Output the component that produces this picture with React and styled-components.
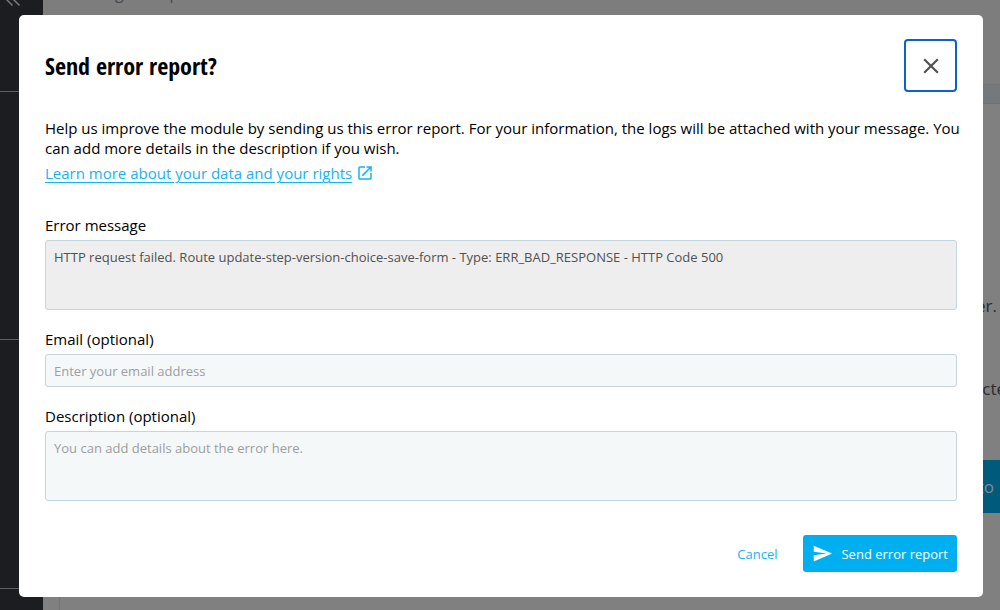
import React from "react"
import styled, { createGlobalStyle, css } from "styled-components"

const GlobalStyle = createGlobalStyle`
    *, *::before, *::after {
        box-sizing: border-box;
    }
    body {
        margin: 0;
        overflow: hidden;
        background: #7f7f7f;
        color: #000;
        font-family: "Open Sans", "Noto Sans", sans-serif;
        font-size: 15px;
        line-height: 20px;
    }
    button, input, textarea {
        font-family: inherit;
    }
`
const Page = styled.div`
    display: flex;
    height: 100vh;
    overflow: hidden;
    background: #808080;
    color: #2b2c30;
`
const Sidebar = styled.nav`
    flex: none;
    width: 43px;
    background: #1b1d21;
    color: #77787a;
`
const SidebarGroup = styled.div`
    height: ${props => props.$height}px;
    border-bottom: 1px solid #5d6163;
`
const CollapseButton = styled.button`
    display: flex;
    align-items: flex-start;
    height: 12px;
    padding: 0 0 0 6px;
    border: 0;
    background: none;
    color: inherit;
`
const Main = styled.main`
    flex: 1;
    min-width: 0;
`
const Header = styled.header`
    height: 85px;
    overflow: hidden;
    border-bottom: 1px solid #737476;
    background: #7d7d7d;
`
const HeaderTitle = styled.h2`
    margin: -20px 0 0;
    padding-left: 72px;
    color: #45474a;
    font-size: 16px;
    font-weight: 400;
    line-height: 26px;
`
const Toolbar = styled.div`
    height: 19px;
    border-bottom: 1px solid #6d7073;
    background: #75797c;
`
const Content = styled.section`
    display: flex;
    flex-direction: column;
    align-items: flex-end;
    height: 100%;
    margin-left: 16px;
    padding-top: 190px;
    border-left: 1px solid #757575;
    font-size: 17px;
    line-height: 24px;
`
const ContentText = styled.p`
    margin: 0 ${props => props.$bleed ? "-6px" : "3px"} 59px 0;
`
const UpdateButton = styled.button`
    height: 53px;
    padding: 0 6px 0 24px;
    border: 0;
    background: #005a7c;
    color: #83898c;
    font-size: 17px;
`
const Overlay = styled.div`
    position: fixed;
    inset: 0;
    padding: 15px 17px 0 19px;
`
const Dialog = styled.form`
    display: flex;
    flex-direction: column;
    padding: 24px 26px 25px;
    border-radius: 5px;
    background: #fff;
`
const DialogHeader = styled.div`
    display: flex;
    align-items: center;
    justify-content: space-between;
    margin-bottom: 26px;
`
const Title = styled.h1`
    margin: 0;
    font-family: "Ubuntu Condensed", "Open Sans Condensed", "Roboto Condensed", Lato, sans-serif;
    font-size: 24px;
    font-weight: 700;
    line-height: 32px;
`
const CloseButton = styled.button`
    display: flex;
    align-items: center;
    justify-content: center;
    width: 53px;
    height: 53px;
    padding: 0;
    border: 2px solid #0b62cf;
    border-radius: 4px;
    background: #fff;
    color: #505153;
`
const Intro = styled.p`
    margin: 0 -8px 5px 0;
`
const LearnMore = styled.a`
    display: flex;
    align-items: center;
    align-self: flex-start;
    gap: 4px;
    margin-bottom: 32px;
    color: #16b3f1;
    text-underline-offset: 3px;
`
const Field = styled.div`
    display: flex;
    flex-direction: column;
    gap: 5px;
    margin-bottom: 19px;
`
const Label = styled.label`
    line-height: 20px;
`
const controlStyles = css`
    display: block;
    width: 100%;
    margin: 0;
    border: 1px solid #c3d5de;
    border-radius: 3px;
    outline: 0;
    background: #f4f8f9;
    color: #505153;
    font-size: 13px;
    line-height: 18px;

    &::placeholder {
        color: #9d9e9f;
        opacity: 1;
    }
    &:read-only {
        background: #eee;
    }
`
const TextInput = styled.input`
    ${controlStyles}
    height: 33px;
    padding: 0 8px;
`
const TextArea = styled.textarea`
    ${controlStyles}
    height: 70px;
    padding: 7px 8px;
    resize: none;
`
const Actions = styled.div`
    display: flex;
    justify-content: flex-end;
    gap: 17px;
    margin-top: 15px;
`
const Button = styled.button`
    display: flex;
    align-items: center;
    gap: 8px;
    height: 37px;
    padding: 0 9px;
    border: 0;
    border-radius: 3px;
    background: #fff;
    color: #16b3f1;
    font-size: 13px;

    ${props => props.$primary && css`
        background: #00aff0;
        color: #fff;
    `}
`

const CollapseIcon = () => (
    <svg width="16" height="8" viewBox="0 0 16 8" fill="none" stroke="currentColor" strokeWidth="1.5">
        <path d="M6.500 5.500 L0.500 -0.500 L6.500 -6.500 M13.500 5.500 L7.500 -0.500 L13.500 -6.500" />
    </svg>
)

const CloseIcon = () => (
    <svg width="26" height="26" viewBox="0 0 24 24" fill="currentColor">
        <path d="M19 6.41 17.59 5 12 10.59 6.41 5 5 6.41 10.59 12 5 17.59 6.41 19 12 13.41 17.59 19 19 17.59 13.41 12z" />
    </svg>
)

const ExternalIcon = () => (
    <svg width="18" height="18" viewBox="0 0 24 24" fill="currentColor">
        <path d="M19 19H5V5h7V3H5a2 2 0 0 0-2 2v14a2 2 0 0 0 2 2h14c1.100 0 2-.900 2-2v-7h-2v7zM14 3v2h3.590l-9.830 9.830 1.410 1.410L19 6.410V10h2V3h-7z" />
    </svg>
)

const SendIcon = () => (
    <svg width="21" height="21" viewBox="0 0 24 24" fill="currentColor">
        <path d="M2.010 21 23 12 2.010 3 2 10l15 2-15 2z" />
    </svg>
)

const App = () => (
    <>
        <GlobalStyle />
        <Page>
            <Sidebar>
                <SidebarGroup $height={92}>
                    <CollapseButton type="button" aria-label="Collapse menu"><CollapseIcon /></CollapseButton>
                </SidebarGroup>
                <SidebarGroup $height={248} />
                <SidebarGroup $height={249} />
            </Sidebar>
            <Main>
                <Header><HeaderTitle>g &nbsp; &nbsp; &nbsp; &nbsp; &nbsp; p</HeaderTitle></Header>
                <Toolbar />
                <Content>
                    <ContentText>er.</ContentText>
                    <ContentText $bleed>cte</ContentText>
                    <UpdateButton type="button">to</UpdateButton>
                </Content>
            </Main>
        </Page>
        <Overlay>
            <Dialog role="dialog" aria-labelledby="report-title">
                <DialogHeader>
                    <Title id="report-title">Send error report?</Title>
                    <CloseButton type="button" aria-label="Close"><CloseIcon /></CloseButton>
                </DialogHeader>
                <Intro>
                    Help us improve the module by sending us this error report. For your information, the logs will be attached with your message. You can add more details in the description if you wish.
                </Intro>
                <LearnMore href="#privacy">Learn more about your data and your rights <ExternalIcon /></LearnMore>
                <Field>
                    <Label htmlFor="error">Error message</Label>
                    <TextArea id="error" readOnly value="HTTP request failed. Route update-step-version-choice-save-form - Type: ERR_BAD_RESPONSE - HTTP Code 500" />
                </Field>
                <Field>
                    <Label htmlFor="email">Email (optional)</Label>
                    <TextInput id="email" type="email" placeholder="Enter your email address" />
                </Field>
                <Field>
                    <Label htmlFor="description">Description (optional)</Label>
                    <TextArea id="description" placeholder="You can add details about the error here." />
                </Field>
                <Actions>
                    <Button type="button">Cancel</Button>
                    <Button type="submit" $primary><SendIcon /> Send error report</Button>
                </Actions>
            </Dialog>
        </Overlay>
    </>
)

export default App
